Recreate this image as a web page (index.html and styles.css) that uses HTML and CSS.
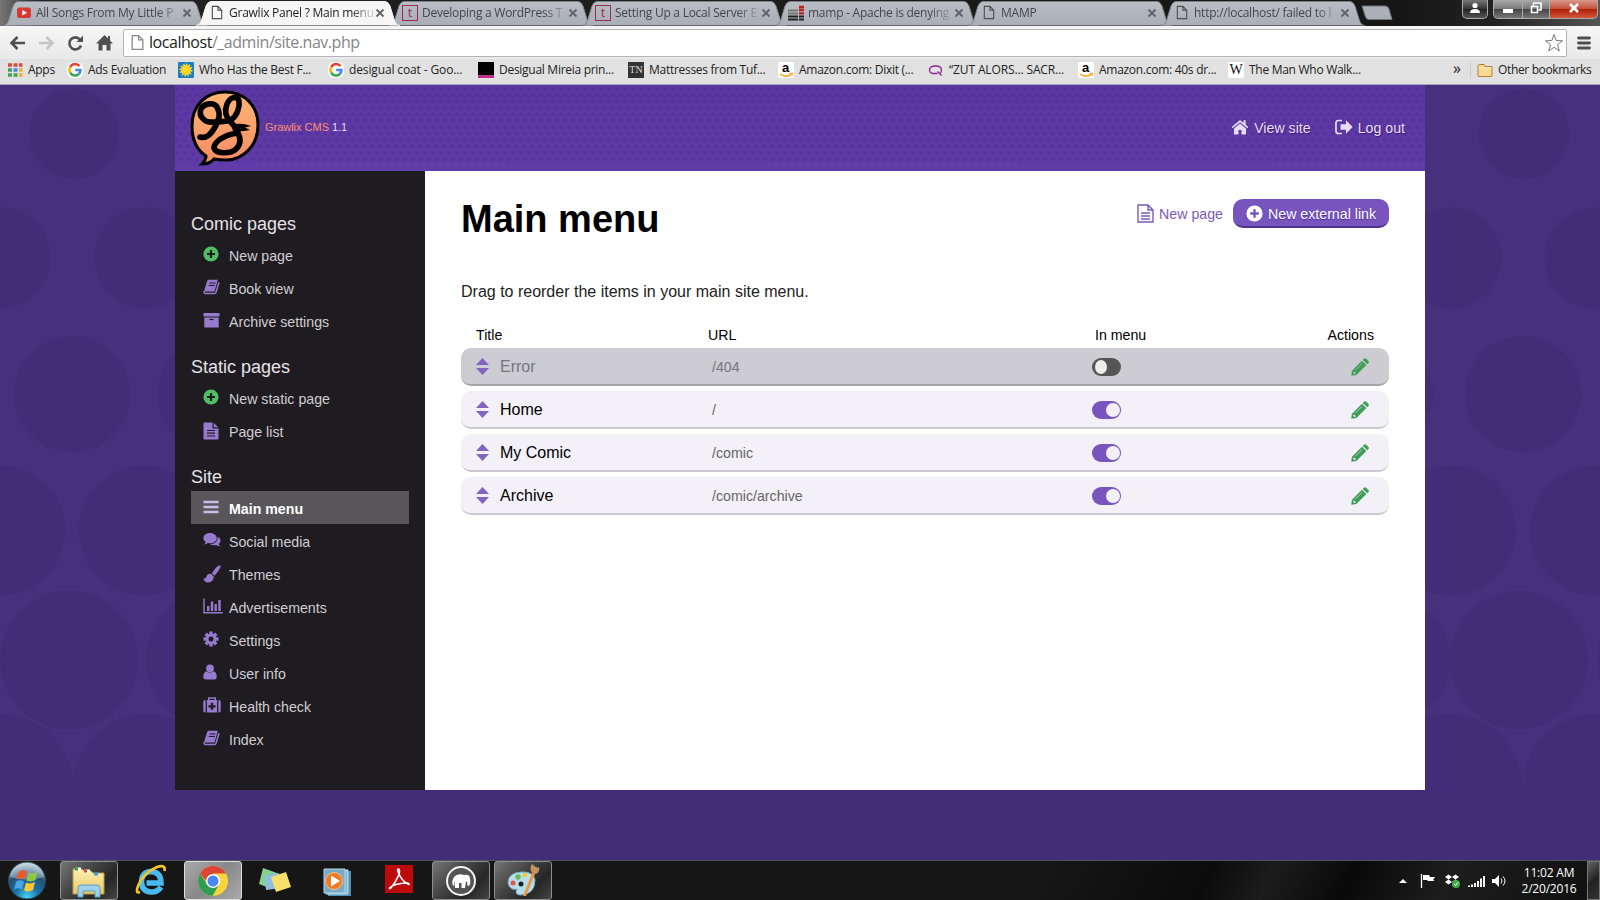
FILE: index.html
```html
<!DOCTYPE html>
<html lang="en">
<head>
<meta charset="utf-8">
<title>Grawlix Panel ? Main menu</title>
<link rel="stylesheet" href="styles.css">
</head>
<body>
<svg class="defs" width="0" height="0">
  <defs>
    <linearGradient id="tabFill" x1="0" y1="0" x2="0" y2="1"><stop offset="0" stop-color="#b9bdc4"/><stop offset="1" stop-color="#a9aeb7"/></linearGradient>
    <linearGradient id="peach" x1="0" y1="0" x2="0" y2="1"><stop offset="0" stop-color="#ffb676"/><stop offset="1" stop-color="#f58b62"/></linearGradient>
    <radialGradient id="orb" cx=".5" cy=".95" r=".9"><stop offset="0" stop-color="#45d5f5"/><stop offset=".35" stop-color="#1b71a8"/><stop offset=".7" stop-color="#24506f"/><stop offset="1" stop-color="#b9cfdb"/></radialGradient>
    <linearGradient id="folder" x1="0" y1="0" x2="0" y2="1"><stop offset="0" stop-color="#fff2b4"/><stop offset="1" stop-color="#e8c661"/></linearGradient>
    <symbol id="tabshape" viewBox="0 0 204 26"><path d="M0 25.5C4 25 5 22 6 19L10 6Q12 1.500 15 1.500H189Q192 1.500 194 6L198 19C199 22 200 25 204 25.500"/></symbol>
    <symbol id="page" viewBox="0 0 12 16"><path d="M1 1.500H7L11 5.500V14.500H1ZM7 1.500V5.500H11" fill="none" stroke="currentColor" stroke-width="1.200"/></symbol>
    <symbol id="x" viewBox="0 0 10 10"><path d="M1.500 1.500L8.500 8.500M8.500 1.500L1.500 8.500" stroke="#5f6368" stroke-width="1.800"/></symbol>
    <symbol id="google" viewBox="0 0 16 16"><rect width="16" height="16" rx="6" fill="#fff"/><g fill="none" stroke-width="2.600"><path d="M12.500 4A5.500 5.500 0 0 0 3.200 5.300" stroke="#ea4335"/><path d="M3.200 5.300A5.500 5.500 0 0 0 3.200 10.700" stroke="#fbbc05"/><path d="M3.200 10.700A5.500 5.500 0 0 0 11.800 12" stroke="#34a853"/><path d="M11.800 12Q13.500 10.500 13.400 8H8.200" stroke="#4285f4"/></g></symbol>
    <symbol id="amazon" viewBox="0 0 16 16"><rect width="16" height="16" rx="2" fill="#fff"/><path d="M2 12Q8 16.500 13 12.200" fill="none" stroke="#f90" stroke-width="1.400"/><path d="M11.500 11.500L14.500 11L13.800 14" fill="none" stroke="#f90"/><text x="4" y="10" class="fav-a">a</text></symbol>
    <symbol id="plus" viewBox="0 0 16 16"><circle cx="8" cy="8" r="7.600" fill="currentColor"/><path d="M8 4V12M4 8H12" stroke="var(--hole)" stroke-width="2.200"/></symbol>
    <symbol id="book" viewBox="0 0 17 16"><path d="M5.500 .8H14.800L11.500 12.500H2.500Q1 12.500 1.300 11.200L4 2.500Q4.400 .8 5.500 .8Z" fill="currentColor"/><path d="M6.500 4H12.500M5.800 6.500H11.800" stroke="var(--hole)"/><path d="M1 12Q.8 14.600 3 14.600H11.500Q12.500 14.600 12.900 13.500L16 3.200" fill="none" stroke="currentColor" stroke-width="1.500"/></symbol>
    <symbol id="archive" viewBox="0 0 17 16"><path d="M.5 1H16.500V4.500H.5ZM1.300 5.500H15.700V15.500H1.300Z" fill="currentColor"/><path d="M6.500 7.500H10.500" stroke="var(--hole)" stroke-width="1.200"/></symbol>
    <symbol id="doc" viewBox="0 0 16 18"><path d="M1.500 .5H9.500V6.500H15.500V16.500Q15.500 17.500 14.500 17.500H1.500Q.5 17.500 .5 16.500V1.500Q.5 .5 1.500 .5ZM10.700 .8L15.200 5.300H10.700Z" fill="currentColor"/><path d="M4 8.500H12M4 11.200H12M4 14H12" stroke="var(--hole)" stroke-width="1.200"/></symbol>
    <symbol id="docline" viewBox="0 0 17 19"><path d="M1 1H11L16 6V18H1ZM11 1V6H16M4 9H13M4 12H13M4 15H13" fill="none" stroke="currentColor" stroke-width="1.400"/></symbol>
    <symbol id="bars" viewBox="0 0 16 16"><path d="M.5 3H15.500M.5 8H15.500M.5 13H15.500" stroke="currentColor" stroke-width="2.500"/></symbol>
    <symbol id="chat" viewBox="0 0 18 16"><path d="M14.800 5Q18 6.500 17.500 9.300Q17.300 10.900 15.600 12Q16 13.500 17.500 14.300Q15 14.500 13.300 13Q9.500 13.800 7 12.200Q14.500 12 14.800 5Z" fill="currentColor"/><path d="M7 1C10.800 1 13.800 3.400 13.800 6.200S10.800 11.300 7 11.300Q6 11.300 5 11.100Q3.200 12.500 1 12.600Q2.300 11.500 2.600 10.100Q.3 8.700 .3 6.200C.3 3.400 3.200 1 7 1Z" fill="currentColor"/></symbol>
    <symbol id="brush" viewBox="0 0 18 18"><path d="M16.200 .3Q18 .4 17.500 2.300Q16 6 11.500 10.700L8.900 8.200Q13.500 1.500 16.200 .3ZM8 8.800L10.800 11.600Q10.500 17.300 5 17.500Q1.500 17.300 .3 13.500Q2.700 14 3.300 12Q4.500 8.400 8 8.800Z" fill="currentColor"/></symbol>
    <symbol id="chart" viewBox="0 0 20 16"><path d="M1 .5V14.700H19.700" fill="none" stroke="currentColor" stroke-width="1.400"/><path d="M5.200 13V8M9 13V3.500M12.700 13V6M16.500 13V2" stroke="currentColor" stroke-width="2.400"/></symbol>
    <symbol id="cog" viewBox="0 0 16 16"><g stroke="currentColor" stroke-width="3.400"><path d="M8 .5V15.500M.5 8H15.500M2.700 2.700L13.300 13.300M13.300 2.700L2.700 13.300"/></g><circle cx="8" cy="8" r="5.500" fill="currentColor"/><circle cx="8" cy="8" r="2.500" fill="var(--hole)"/></symbol>
    <symbol id="user" viewBox="0 0 14 16"><circle cx="7" cy="4.300" r="3.900" fill="currentColor"/><path d="M3.300 7.300Q7 9.800 10.700 7.300Q13.700 8.200 13.700 13Q13.700 15.500 11.300 15.500H2.700Q.3 15.500 .3 13Q.3 8.200 3.300 7.300Z" fill="currentColor"/></symbol>
    <symbol id="medkit" viewBox="0 0 18 16"><path d="M2.600 3V15.500H2Q.3 15.500 .3 13.500V5Q.3 3 2 3ZM15.400 3H16Q17.700 3 17.700 5V13.500Q17.700 15.500 16 15.500H15.400ZM3.900 3H14.100V15.500H3.900Z" fill="currentColor"/><path d="M5.700 3V1H12.300V3" fill="none" stroke="currentColor" stroke-width="1.400"/><path d="M9 5.800V12.800M5.500 9.300H12.500" stroke="var(--hole)" stroke-width="2.300"/></symbol>
    <symbol id="home" viewBox="0 0 18 16"><path d="M9 1L.7 8L1.700 9.200L9 3.200L16.300 9.200L17.300 8L14.700 5.800V1.200H12.500V3.900ZM9 4.500L3 9.500V15.500H7.500V11H10.500V15.500H15V9.500Z" fill="currentColor"/></symbol>
    <symbol id="logout" viewBox="0 0 18 16"><path d="M7 1.500H3.500Q1 1.500 1 4V12Q1 14.500 3.500 14.500H7" fill="none" stroke="currentColor" stroke-width="1.700"/><path d="M5.500 5.300H11V1.300L17.700 8L11 14.700V10.700H5.500Z" fill="currentColor"/></symbol>
    <symbol id="pencil" viewBox="0 0 18 18"><path d="M12.800 .8Q14 -.2 15.200 .8L17.400 3Q18.300 4 17.400 5.200L16.300 6.300L11.700 1.900ZM10.900 2.700L15.400 7.100L5.400 17L.3 17.800L.8 12.900Z" fill="currentColor"/><path d="M4.300 12L11.200 5.500" stroke="var(--hole)" stroke-width=".6"/><path d="M2.500 14L4.300 15.800" stroke="var(--hole)" stroke-width="1.500"/></symbol>
    <pattern id="halftone" width="8" height="13" patternUnits="userSpaceOnUse"><g fill="#54329a"><circle cx="2" cy="3.200" r="2.300"/><circle cx="6" cy="9.700" r="2.300"/></g></pattern>
  </defs>
</svg>

<header class="browser">
  <div class="tabs">
    <div class="tab"><svg class="tab-bg"><use href="#tabshape"/></svg><svg class="fav" width="16" height="16"><rect x="1" y="2.500" width="14" height="10.500" rx="2.500" fill="#d43a34"/><path d="M6.300 5L11 7.800L6.300 10.500Z" fill="#fff"/></svg><span class="tab-title">All Songs From My Little P</span><svg class="close"><use href="#x"/></svg></div>
    <div class="tab active"><svg class="tab-bg"><use href="#tabshape"/></svg><svg class="fav" width="16" height="16"><use href="#page" width="12" height="15" x="2"/></svg><span class="tab-title">Grawlix Panel ? Main menu</span><svg class="close"><use href="#x"/></svg></div>
    <div class="tab"><svg class="tab-bg"><use href="#tabshape"/></svg><span class="fav tfav">t</span><span class="tab-title">Developing a WordPress T</span><svg class="close"><use href="#x"/></svg></div>
    <div class="tab"><svg class="tab-bg"><use href="#tabshape"/></svg><span class="fav tfav">t</span><span class="tab-title">Setting Up a Local Server E</span><svg class="close"><use href="#x"/></svg></div>
    <div class="tab"><svg class="tab-bg"><use href="#tabshape"/></svg><svg class="fav" width="16" height="16"><path d="M0 5.500H10M0 8.500H10" stroke="#777" stroke-width="2"/><path d="M0 11.500H10M0 14.500H10M11 11.500H16M11 14.500H16" stroke="#222" stroke-width="2.200"/><path d="M11 2H16M11 5H16M11 8.300H16" stroke="#b22" stroke-width="2.300"/></svg><span class="tab-title">mamp - Apache is denying</span><svg class="close"><use href="#x"/></svg></div>
    <div class="tab"><svg class="tab-bg"><use href="#tabshape"/></svg><svg class="fav" width="16" height="16"><use href="#page" width="12" height="15" x="2"/></svg><span class="tab-title">MAMP</span><svg class="close"><use href="#x"/></svg></div>
    <div class="tab"><svg class="tab-bg"><use href="#tabshape"/></svg><svg class="fav" width="16" height="16"><use href="#page" width="12" height="15" x="2"/></svg><span class="tab-title">http://localhost/ failed to l</span><svg class="close"><use href="#x"/></svg></div>
    <svg class="newtab" width="32" height="16"><path d="M1 1H24Q27 1 28 4L31 14.500H8Q5.500 14.500 4.500 12Z" fill="#abb0b8" stroke="#70757c"/></svg>
    <div class="wincontrols">
      <span class="wc profile"><svg width="12" height="12"><circle cx="6" cy="3.500" r="2.600" fill="#fff"/><path d="M1 11Q1 7 6 7T11 11Z" fill="#fff"/></svg></span>
      <span class="wc min"><i></i></span>
      <span class="wc max"><svg width="12" height="12"><path d="M3.500 3.500V1H11V8H8.500M1.500 4.500H7.500V10.500H1.500Z" fill="none" stroke="#fff" stroke-width="1.600"/></svg></span>
      <span class="wc exit"><svg width="12" height="12"><path d="M2 2L10 10M10 2L2 10" stroke="#fff" stroke-width="2.600"/></svg></span>
    </div>
  </div>
  <div class="toolbar">
    <svg class="navicons" width="112" height="24" fill="none" stroke-width="2.600">
      <path d="M18 12H5M10.500 6L4.500 12L10.500 18" stroke="#505050"/>
      <path d="M32 12H45M39.500 6L45.500 12L39.500 18" stroke="#c5c5c5"/>
      <path d="M73 8.500A6 6 0 1 0 74 14.500" stroke="#505050"/><path d="M76 4.500V11H69.500Z" fill="#505050"/>
      <path d="M97.500 4L89 12.500H91.500V19.500H95.500V14H99.500V19.500H103.500V12.500H106L103 9.500V5H101V7.500Z" fill="#505050"/>
    </svg>
    <div class="omnibox"><svg class="pageicon" width="13" height="17"><use href="#page"/></svg><span class="url"><b>localhost</b>/_admin/site.nav.php</span>
      <svg class="star" width="20" height="20"><path d="M10 1.500L12.200 7.500L18.500 7.800L13.500 11.700L15.300 18L10 14.300L4.700 18L6.500 11.700L1.500 7.800L7.800 7.500Z" fill="#fff" stroke="#777"/></svg></div>
    <svg class="menu" width="14" height="14"><path d="M1.500 2H12.500M1.500 7H12.500M1.500 12H12.500" stroke="#505050" stroke-width="2.800" stroke-linecap="round"/></svg>
  </div>
  <nav class="bookmarks">
    <a class="bm b1"><svg class="bi" width="16" height="16"><path d="M0 3H4M5.500 3H9.500M11 3H14.500" stroke="#d84b3e" stroke-width="3.500"/><path d="M0 8H4M0 13H4M5.500 13H9.500" stroke="#41a05d" stroke-width="3.500"/><path d="M5.500 8H9.500" stroke="#4b87e8" stroke-width="3.500"/><path d="M11 8H14.500M11 13H14.500" stroke="#ecb12d" stroke-width="3.500"/></svg><span>Apps</span></a>
    <a class="bm b2"><svg class="bi"><use href="#google"/></svg><span>Ads Evaluation</span></a>
    <a class="bm b3"><svg class="bi"><rect width="16" height="16" rx="1" fill="#1780c4"/><circle cx="8" cy="8" r="5" fill="#ffd52b"/><circle cx="8" cy="8" r="5.500" fill="none" stroke="#ffd52b" stroke-width="2" stroke-dasharray="1.500 1.300"/></svg><span>Who Has the Best F...</span></a>
    <a class="bm b4"><svg class="bi"><use href="#google"/></svg><span>desigual coat - Goo...</span></a>
    <a class="bm b5"><svg class="bi"><path d="M0 0H16V13.500H0Z"/><path d="M0 13.500H16V16H0Z" fill="#d6218f"/></svg><span>Desigual Mireia prin...</span></a>
    <a class="bm b6"><i class="bi tn">TN</i><span>Mattresses from Tuf...</span></a>
    <a class="bm b7"><svg class="bi"><use href="#amazon"/></svg><span>Amazon.com: Dixit (...</span></a>
    <a class="bm b8"><svg class="bi"><path d="M9.500 11.500H5Q1.500 11 1.500 8Q1.500 4 7.500 4Q13.500 4 13.500 8Q13.500 10 12 11M9.500 9.500L13.500 13.500" fill="none" stroke="#92278f" stroke-width="1.300"/></svg><span>“ZUT ALORS... SACR...</span></a>
    <a class="bm b9"><svg class="bi"><use href="#amazon"/></svg><span>Amazon.com: 40s dr...</span></a>
    <a class="bm b10"><i class="bi wiki">W</i><span>The Man Who Walk...</span></a>
    <span class="more">»</span>
    <a class="other"><svg width="16" height="16"><path d="M1 4V13.500Q1 14.500 2 14.500H14Q15 14.500 15 13.500V4.500H8L7 2.500H2.500Q1.500 2.500 1 4Z" fill="#fbd992" stroke="#b27d31"/><path d="M1.500 6H14.500" stroke="#fff0c8"/></svg><span>Other bookmarks</span></a>
  </nav>
</header>

<main class="desktop">
  <svg class="backdrop" width="1600" height="775" viewBox="0 85 1600 775">
    <g fill="#432d78">
      <circle cx="74" cy="134" r="45"/><circle cx="0" cy="258" r="50.500"/><circle cx="145" cy="258" r="50.500"/>
      <circle cx="72" cy="394" r="58"/><circle cx="216" cy="394" r="58"/><circle cx="0" cy="530.500" r="65"/><circle cx="144" cy="530.500" r="65"/>
      <circle cx="69" cy="660" r="69"/><circle cx="215" cy="660" r="69"/><circle cx="0" cy="787" r="73"/><circle cx="146" cy="787" r="73"/>
      <circle cx="1524" cy="134" r="45"/><circle cx="1451" cy="258" r="50.500"/><circle cx="1595" cy="258" r="50.500"/>
      <circle cx="1375" cy="394" r="58"/><circle cx="1523" cy="394" r="58"/><circle cx="1451" cy="530.500" r="65"/><circle cx="1595" cy="530.500" r="65"/>
      <circle cx="1381" cy="660" r="69"/><circle cx="1519" cy="660" r="69"/><circle cx="1666" cy="660" r="69"/><circle cx="1449" cy="787" r="73"/><circle cx="1596" cy="787" r="73"/>
      <path d="M0 787H1600V860H0Z"/>
    </g>
  </svg>
  <div class="panel">
    <div class="masthead">
      <svg class="dots" width="1250" height="86"><rect y="2" width="1250" height="76" fill="url(#halftone)"/></svg>
      <svg class="logo" width="72" height="78" viewBox="0 0 72 78">
        <path d="M36 3C56 3 69 17 69 36S56 70 38 71Q30 71 25 70Q21 75 13 75Q17 71 17 67C8 61 3 52 3 37C3 16 17 3 36 3Z" fill="url(#peach)" stroke="#000" stroke-width="3"/>
        <path d="M12 20C15 14 25 13 28 18C32 25 30 31 26 38C22 45 18 50 11 48M12 20C9 27 16 34 23 33C31 33 36 33 42 31C48 27 51 18 50 12C48 6 41 8 38 15C35 23 37 28 41 32C44 37 49 38 49 44C34 46 25 53 25 59C27 65 40 65 46 61C52 56 52 50 49 44" fill="none" stroke="#000" stroke-width="5.600" stroke-linecap="round" stroke-linejoin="round"/>
        <path d="M42 36Q52 33 62 37L56 38.500L61 41Q52 43 44 42Z"/>
      </svg>
      <p class="brand"><b>Grawlix CMS</b> 1.1</p>
      <nav class="top-links"><a><svg width="18" height="16"><use href="#home"/></svg>View site</a><a class="out"><svg width="18" height="16"><use href="#logout"/></svg>Log out</a></nav>
    </div>
    <div class="columns">
      <aside class="sidebar">
        <h3>Comic pages</h3>
        <a class="item green"><svg><use href="#plus" width="16" height="16"/></svg>New page</a>
        <a class="item"><svg><use href="#book" width="17" height="16"/></svg>Book view</a>
        <a class="item"><svg><use href="#archive" width="17" height="16"/></svg>Archive settings</a>
        <h3>Static pages</h3>
        <a class="item green"><svg><use href="#plus" width="16" height="16"/></svg>New static page</a>
        <a class="item"><svg><use href="#doc" width="16" height="18"/></svg>Page list</a>
        <h3>Site</h3>
        <a class="item current"><svg><use href="#bars" width="16" height="16"/></svg>Main menu</a>
        <a class="item"><svg><use href="#chat" width="18" height="16"/></svg>Social media</a>
        <a class="item"><svg><use href="#brush" width="18" height="18"/></svg>Themes</a>
        <a class="item"><svg><use href="#chart" width="20" height="16"/></svg>Advertisements</a>
        <a class="item"><svg><use href="#cog" width="16" height="16"/></svg>Settings</a>
        <a class="item"><svg><use href="#user" width="14" height="16"/></svg>User info</a>
        <a class="item"><svg><use href="#medkit" width="18" height="16"/></svg>Health check</a>
        <a class="item"><svg><use href="#book" width="17" height="16"/></svg>Index</a>
      </aside>
      <section class="content">
        <div class="heading"><h1>Main menu</h1><a class="newpage"><svg width="17" height="19"><use href="#docline"/></svg>New page</a><a class="button"><svg width="17" height="17"><use href="#plus"/></svg>New external link</a></div>
        <p class="hint">Drag to reorder the items in your main site menu.</p>
        <div class="thead"><span>Title</span><span>URL</span><span>In menu</span><span>Actions</span></div>
        <div class="row off"><svg class="grip"><path d="M6.500 0L13 7H0ZM0 10H13L6.500 17Z"/></svg><span class="title">Error</span><span class="path">/404</span><i class="toggle"></i><svg class="edit"><use href="#pencil"/></svg></div>
        <div class="row"><svg class="grip"><path d="M6.500 0L13 7H0ZM0 10H13L6.500 17Z"/></svg><span class="title">Home</span><span class="path">/</span><i class="toggle"></i><svg class="edit"><use href="#pencil"/></svg></div>
        <div class="row"><svg class="grip"><path d="M6.500 0L13 7H0ZM0 10H13L6.500 17Z"/></svg><span class="title">My Comic</span><span class="path">/comic</span><i class="toggle"></i><svg class="edit"><use href="#pencil"/></svg></div>
        <div class="row"><svg class="grip"><path d="M6.500 0L13 7H0ZM0 10H13L6.500 17Z"/></svg><span class="title">Archive</span><span class="path">/comic/archive</span><i class="toggle"></i><svg class="edit"><use href="#pencil"/></svg></div>
      </section>
    </div>
  </div>
</main>

<footer class="taskbar">
  <span class="start"><svg width="40" height="38"><circle cx="20" cy="19.500" r="18.500" fill="url(#orb)" stroke="#2b4a5c"/><path d="M3 16Q5 3 20 2Q35 3 37 16Q20 21 3 16Z" fill="#d5e2ea" opacity=".4"/><path d="M11.500 11Q15 8 19.500 10.500L17.500 18.500Q13.500 16 9.500 18.500Z" fill="#f0582a"/><path d="M21.500 11.500Q26 13.500 30.500 11L28.500 19Q24 21.500 19.500 19.500Z" fill="#91c746"/><path d="M9 20.500Q13 18 17 20.500L15 28.500Q11 26 7 28.500Z" fill="#48a7e0"/><path d="M19 21.500Q23.500 23.500 28 21L26 29Q21.500 31.500 17 29.500Z" fill="#fdc92f"/></svg></span>
  <span class="app open"><svg width="36" height="34"><path d="M2 30V5H11L13 7H20L22 9H33V30Z" fill="url(#folder)" stroke="#b99b4d"/><path d="M4 5H10M13 7H19" stroke="#fff" stroke-width="3"/><path d="M4 5H7" stroke="#2ba53d" stroke-width="3"/><path d="M13 7H16" stroke="#d14a2e" stroke-width="3"/><path d="M23 10H27" stroke="#3f9fd8" stroke-width="3"/><path d="M7 33V24Q7 21 10 21H26Q29 21 29 24V33H24V27H12V33Z" fill="#9fd0ea" stroke="#5e9fc7"/></svg></span>
  <span class="app"><svg width="36" height="34"><path d="M28 23Q24.500 28.500 17.500 28Q8.500 27 8.500 17.500Q9 8 18 7.500Q28 8 28 19H13.500" fill="none" stroke="#49b9ee" stroke-width="5.500"/><path d="M7 28Q2 30 5 22Q10 9 24 3Q33 0 31.500 7" fill="none" stroke="#f6c523" stroke-width="2.600"/></svg></span>
  <span class="app open bright"><svg width="32" height="32" viewBox="0 0 32 32"><circle cx="16" cy="16" r="15" fill="#fbd43b"/><path d="M3 8.500A15 15 0 0 1 29 8.500H16L10 17Z" fill="#dc4437"/><path d="M3 8.500A15 15 0 0 0 15.500 31L22 19.500L10 19Z" fill="#2f9e55"/><circle cx="16" cy="16" r="7" fill="#fff"/><circle cx="16" cy="16" r="5.500" fill="#4688f1"/></svg></span>
  <span class="app"><svg width="36" height="32"><path d="M6 3L20 8L15 24L2 19Z" fill="#85cf91"/><path d="M8 10L22 8L25 23L9 25Z" fill="#8ebedd"/><path d="M14 12L29 7L34 22L19 27Z" fill="#f7df6c"/></svg></span>
  <span class="app"><svg width="34" height="32"><path d="M8 6H31V31H8Z" fill="#4f90b5"/><path d="M6 5H28V29H6Z" fill="#83bad7" stroke="#c3e0ee"/><path d="M4 4H25V28H4Z" fill="#77abc8" stroke="#b5d7e8"/><circle cx="14" cy="16" r="8.500" fill="#ed7b23" stroke="#f8bf81"/><path d="M11 10.500L20 16L11 21.500Z" fill="#fff"/></svg></span>
  <span class="app acro"><svg width="28" height="28"><rect width="28" height="28" fill="#bd0a0a"/><path d="M13 4C17 4 13 14 6 23C2 26 5 18 23 18C28 22 16 18 12.500 5Z" fill="none" stroke="#fff" stroke-width="1.500"/></svg></span>
  <span class="app open"><svg width="32" height="32"><circle cx="16" cy="16" r="14" fill="#555" stroke="#f3f3f3" stroke-width="2"/><path d="M8 21Q6 15 10 11Q14 8 19 10Q25 9 25 14Q26 19 24 21L22 20Q23 17 21 16L20 23H16.500V18H14V23H10V16Q9 18 9.500 20Z" fill="#fff"/></svg></span>
  <span class="app open paint"><svg width="36" height="34"><path d="M3 19Q3 9 16 8Q28 7 30 16Q30 30 16 31Q9 31 12 25Q5 27 3 19Z" fill="#b9dced" stroke="#78abc8"/><circle cx="8" cy="19" r="2.500" fill="#e35a43"/><circle cx="13" cy="13" r="2.700" fill="#69bd57"/><circle cx="20" cy="11" r="2.300" fill="#efc737"/><circle cx="16" cy="20" r="2.500" fill="#202020"/><path d="M18 32L27 9L30 10L21 32Z" fill="#e39a43"/><path d="M27 9Q24 4 27 0Q32 5 34 3Q35 9 30 10Z" fill="#c9935e"/></svg></span>
  <div class="tray">
    <svg width="108" height="20"><path d="M0 12L4 8L8 12Z" fill="#fff"/><path d="M22.500 3V17" stroke="#fff" stroke-width="1.300"/><path d="M24 4H30L31 6H36L34 9L36 10H29L28 9H24Z" fill="#fff"/><path d="M46 6L49.500 3.500L53 6L49.500 8.500ZM53 6L56.500 3.500L60 6L56.500 8.500ZM46 11L49.500 8.500L53 11L49.500 13.500ZM53 11L56.500 8.500L60 11L56.500 13.500Z" fill="#fff"/><circle cx="57" cy="13" r="4" fill="#3dae49"/><path d="M55 13L56.500 14.500L59 11.500" stroke="#fff" fill="none"/><path d="M70 16V14.500M73 16V13.500M76 16V12M79 16V10M82 16V7.500M85 16V5" stroke="#fff" stroke-width="1.900"/><path d="M93 8H96L100 4V16L96 12H93Z" fill="#fff"/><path d="M102 7.500Q104 10 102 12.500M104 5.500Q108 10 104 14.500" fill="none" stroke="#fff"/></svg>
    <div class="clock"><span>11:02 AM</span><span>2/20/2016</span></div>
    <i class="peek"></i>
  </div>
</footer>
</body>
</html>
```

FILE: styles.css
```css
* { box-sizing: border-box; }
body { margin: 0; width: 1600px; height: 900px; overflow: hidden; display: flex; flex-direction: column; background: #47307d; font-family: "Liberation Sans", Arial, sans-serif; }
.defs { position: absolute; }
svg { flex: none; }

/* browser window */
.browser { height: 85px; flex: none; font-family: "Open Sans", "Noto Sans", sans-serif; font-size: 12px; color: #222; background: #e1e1e1; border-bottom: 1px solid #aaa4b8; }
.tabs { height: 26px; display: flex; padding-left: 3px; background: linear-gradient(90deg, #777 0, #222 40px, #161616 1400px, #222 1500px, #555 1600px); position: relative; }
.tab { position: relative; width: 193px; height: 26px; padding: 0 0 0 13px; display: flex; align-items: center; color: #43464b; flex: none; }
.tab-bg { position: absolute; left: 0; top: 0; width: 204px; height: 26px; fill: url(#tabFill); stroke: #7d8188; }
.active .tab-bg { fill: #f6f6f6; stroke: #f6f6f6; }
.active { z-index: 1; color: #222; }
.fav { position: relative; width: 16px; height: 16px; margin-right: 4px; color: #505050; flex: none; }
.tfav { border: 1px solid #9b2c4c; color: #9b2c4c; font-size: 13px; line-height: 13px; text-align: center; }
.tab-title { position: relative; width: 144px; flex: none; white-space: nowrap; letter-spacing: -.25px; line-height: 20px; -webkit-mask-image: linear-gradient(90deg, #000 122px, rgba(0, 0, 0, .2) 142px); mask-image: linear-gradient(90deg, #000 122px, rgba(0, 0, 0, .2) 142px); }
.close { position: relative; width: 10px; height: 10px; margin-left: 2px; }
.newtab { margin: 5px 0 0 7px; }
.wincontrols { position: absolute; left: 1462px; top: 0; display: flex; }
.wc { height: 19px; border: 1px solid #aaa; border-top: 0; background: linear-gradient(#777, #333 50%, #222 51%, #555); display: flex; align-items: center; justify-content: center; }
.wc svg { margin-top: -2px; }
.profile { width: 26px; margin-right: 5px; border-radius: 0 0 5px 5px; }
.min { width: 30px; border-radius: 0 0 0 5px; background: linear-gradient(#aaa, #777 50%, #444 51%, #777); }
.min i { width: 10px; height: 4px; background: #fff; margin-top: 3px; }
.max { width: 27px; border-left: 0; background: linear-gradient(#aaa, #777 50%, #444 51%, #777); }
.exit { width: 48px; border-left: 0; border-radius: 0 0 5px 0; background: linear-gradient(#d99a8d, #c7513c 48%, #a91f08 50%, #d5573b); }
.toolbar { height: 33px; display: flex; align-items: center; padding: 0 9px 0 7px; background: linear-gradient(#f6f6f6, #e9e9e9); }
.omnibox { width: 1445px; height: 28px; margin-left: 4px; background: #fff; border: 1px solid #b4b4b4; border-radius: 2px; display: flex; align-items: center; padding: 0 2px 0 7px; }
.pageicon { color: #888; }
.url { margin-left: 5px; flex: 1; font-size: 16px; line-height: 22px; margin-top: -1px; color: #858585; letter-spacing: -.46px; }
.url b { font-weight: 400; color: #222; }
.menu { margin-left: 10px; }
.bookmarks { height: 21px; display: flex; align-items: center; padding-left: 8px; letter-spacing: -.28px; white-space: nowrap; }
.bm { display: flex; align-items: center; flex: none; gap: 5px; }
.bi { width: 16px; height: 16px; flex: none; }
.b1 { width: 59px; gap: 4px; } .b2 { width: 111px; } .b3 { width: 150px; } .b4 { width: 150px; } .b5 { width: 150px; } .b6 { width: 150px; } .b7 { width: 150px; } .b8 { width: 150px; } .b9 { width: 150px; } .b10 { width: 225px; }
.b4, .b8 { letter-spacing: -.13px; }
.tn { background: #333; color: #ddd; font: 10px/16px "Liberation Serif", serif; text-align: center; letter-spacing: 0; }
.wiki { background: #fff; color: #111; font: 14px/16px "Liberation Serif", serif; text-align: center; border-radius: 2px; }
.fav-a { font: bold 13px "Liberation Sans", sans-serif; }
.more { width: 17px; font-size: 16px; line-height: 16px; margin-top: -3px; }
.other { display: flex; align-items: center; gap: 5px; border-left: 1px solid #ccc; padding-left: 6px; letter-spacing: -.35px; }

/* page */
.desktop { position: relative; height: 775px; flex: none; }
.backdrop { position: absolute; left: 0; top: 0; }
.panel { position: relative; width: 1250px; height: 705px; margin: 0 auto; display: flex; flex-direction: column; }
.masthead { position: relative; height: 86px; flex: none; background: linear-gradient(#5a36a0, #603ca8); display: flex; align-items: center; padding: 0 20px 0 14px; }
.dots { position: absolute; left: 0; top: 0; opacity: .65; }
.logo { position: relative; margin-top: 0; }
.brand { position: relative; margin: -2px 0 0 4px; font-size: 11px; letter-spacing: -.02px; color: #e6dcf5; flex: 1; }
.brand b { font-weight: 400; color: #ff9073; }
.top-links { position: relative; display: flex; gap: 24px; font-size: 14.200px; color: #e6dcf5; text-shadow: 1px 1px 1px #3b2170; }
.top-links a { display: flex; align-items: center; gap: 5px; }
.top-links svg { margin-top: -2px; }
.columns { display: flex; flex: 1; }
.sidebar { --hole: #1f1c21; width: 250px; background: #1f1c21; padding: 42px 16px 0; }
.sidebar h3 { margin: 0; height: 25px; line-height: 23px; font-size: 18px; font-weight: 400; color: #e4e1e7; }
.sidebar .item + h3 { margin-top: 19px; }
.item { height: 33px; display: flex; align-items: center; padding: 2px 0 0 12px; font-size: 14.200px; color: #d0cdd2; }
.item svg { width: 20px; height: 18px; margin: -1px 6px 0 0; color: #967acd; }
.green svg { color: #50bd63; }
.current { --hole: #59565b; background: #59565b; color: #fff; font-weight: 700; }
.current svg { color: #cbbde8; }
.content { flex: 1; background: #fff; padding: 26px 36px 0; color: #000; }
.heading { display: flex; align-items: flex-start; height: 79px; font-size: 14.200px; }
.heading h1 { margin: 0; font-size: 38px; line-height: 44px; flex: 1; }
.newpage { display: flex; align-items: center; gap: 5px; height: 34px; color: #7b5cb8; margin-right: 10px; }
.newpage svg { margin-top: -2px; }
.button { --hole: #7854be; display: flex; align-items: center; gap: 5px; width: 156px; height: 29px; margin-top: 2px; padding: 2px 0 0 13px; background: #7854be; border-bottom: 2px solid #4f3190; border-radius: 10px; color: #fff; white-space: nowrap; text-shadow: 0 1px 1px #4f3190; }
.button svg { margin-top: -1px; }
.hint { margin: 5px 0 0; font-size: 16px; line-height: 22px; color: #222; }
.thead { display: flex; height: 27px; margin-top: 18px; padding: 0 15px; line-height: 29px; font-size: 14.200px; }
.thead span:nth-child(1) { width: 232px; }
.thead span:nth-child(2) { width: 387px; }
.thead span:nth-child(3) { flex: 1; }
.row { --hole: #f3f1f7; height: 38px; margin-bottom: 5px; display: flex; align-items: center; padding: 0 20px 0 15px; background: #f3f1f7; border-bottom: 2px solid #cac8ce; border-radius: 10px; }
.grip { width: 13px; height: 17px; fill: #8165c0; }
.title { width: 212px; margin-left: 11px; padding-top: 2px; font-size: 16px; }
.path { width: 380px; font-size: 14.200px; color: #666; padding-top: 1px; }
.toggle { width: 29px; height: 18px; margin-top: 2px; border-radius: 9px; background: #7854be; padding: 2px 1px; display: flex; justify-content: flex-end; }
.toggle::after { content: ""; width: 14px; height: 14px; border-radius: 50%; background: #f3f1f7; }
.edit { width: 18px; height: 18px; margin: 1px 0 0 auto; color: #3f9d59; }
.off { --hole: #cdccd2; background: #cdccd2; border-color: #a5a4aa; }
.off .title, .off .path { color: #77757c; }
.off .toggle { background: #555; justify-content: flex-start; padding-left: 3px; }
.off .toggle::after { width: 12px; background: #eee; }

/* taskbar */
.taskbar { height: 40px; flex: none; display: flex; align-items: center; padding-left: 7px; border-top: 1px solid #55535a; background: linear-gradient(115deg, #161616 0, #161616 65%, #0b0b0b 75%, #1c1c1c 79%, #090909 84%, #1d1d1d 90%, #101010 100%); }
.start { width: 53px; height: 39px; }
.app { width: 58px; height: 39px; margin-right: 4px; display: flex; align-items: center; justify-content: center; flex: none; }
.open { border: 1px solid #8d8d8d; border-radius: 3px; background: linear-gradient(135deg, #777 0, #444 40%, #262626 70%, #444); }
.bright { border-color: #ddd; background: linear-gradient(135deg, #aaa, #888 50%, #aaa); }
.acro svg { margin-top: -4px; }
.tray { margin-left: auto; display: flex; align-items: center; color: #fff; }
.clock { width: 76px; margin-left: 4px; display: flex; flex-direction: column; align-items: center; font: 12px/16px "Open Sans", sans-serif; letter-spacing: -.2px; padding-top: 1px; }
.peek { width: 13px; height: 39px; border: 1px solid #777; background: linear-gradient(135deg, #666, #222 50%, #333); }
```
